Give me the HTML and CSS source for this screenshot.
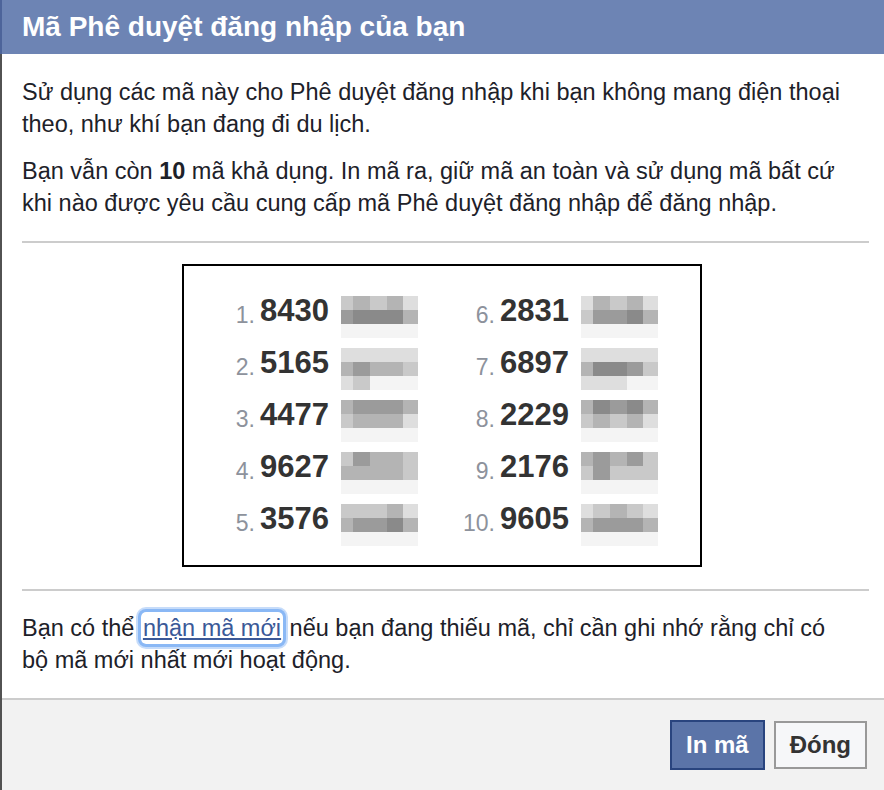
FILE: index.html
```html
<!DOCTYPE html>
<html lang="vi">
<head>
  <meta charset="UTF-8" />
  <title>Mã Phê duyệt đăng nhập của bạn</title>
  <link rel="stylesheet" href="styles.css">
</head>
<body>
  <div class="dialog">
    <header>Mã Phê duyệt đăng nhập của bạn</header>

    <main>
      <p>Sử dụng các mã này cho Phê duyệt đăng nhập khi bạn không mang điện thoại theo, như khí bạn đang đi du lịch.</p>
      <p>Bạn vẫn còn <b>10</b> mã khả dụng. In mã ra, giữ mã an toàn và sử dụng mã bất cứ khi nào được yêu cầu cung cấp mã Phê duyệt đăng nhập để đăng nhập.</p>

      <hr>

      <div class="codebox">
        <div class="codes">
          <div class="code"><span class="idx">1.</span><span class="num">8430</span>
            <span class="blur"><i class="s4"></i><i class="s3"></i><i class="s4"></i><i class="s3"></i><i class="s5"></i><i class="s2"></i><i class="s1"></i><i class="s1"></i><i class="s1"></i><i class="s3"></i><i class="s6"></i><i class="s6"></i><i class="s6"></i><i class="s6"></i><i class="s6"></i></span></div>
          <div class="code"><span class="idx">6.</span><span class="num">2831</span>
            <span class="blur"><i class="s5"></i><i class="s3"></i><i class="s4"></i><i class="s3"></i><i class="s5"></i><i class="s4"></i><i class="s2"></i><i class="s2"></i><i class="s1"></i><i class="s3"></i><i class="s6"></i><i class="s6"></i><i class="s6"></i><i class="s6"></i><i class="s6"></i></span></div>
          <div class="code"><span class="idx">2.</span><span class="num">5165</span>
            <span class="blur"><i class="s5"></i><i class="s5"></i><i class="s5"></i><i class="s5"></i><i class="s5"></i><i class="s3"></i><i class="s2"></i><i class="s3"></i><i class="s3"></i><i class="s4"></i><i class="s5"></i><i class="s4"></i><i class="s6"></i><i class="s6"></i><i class="s6"></i></span></div>
          <div class="code"><span class="idx">7.</span><span class="num">6897</span>
            <span class="blur"><i class="s5"></i><i class="s5"></i><i class="s5"></i><i class="s5"></i><i class="s5"></i><i class="s3"></i><i class="s1"></i><i class="s1"></i><i class="s2"></i><i class="s4"></i><i class="s5"></i><i class="s5"></i><i class="s5"></i><i class="s6"></i><i class="s6"></i></span></div>
          <div class="code"><span class="idx">3.</span><span class="num">4477</span>
            <span class="blur"><i class="s3"></i><i class="s2"></i><i class="s2"></i><i class="s2"></i><i class="s3"></i><i class="s4"></i><i class="s3"></i><i class="s3"></i><i class="s3"></i><i class="s5"></i><i class="s6"></i><i class="s6"></i><i class="s6"></i><i class="s6"></i><i class="s6"></i></span></div>
          <div class="code"><span class="idx">8.</span><span class="num">2229</span>
            <span class="blur"><i class="s3"></i><i class="s1"></i><i class="s2"></i><i class="s1"></i><i class="s3"></i><i class="s4"></i><i class="s3"></i><i class="s4"></i><i class="s3"></i><i class="s5"></i><i class="s6"></i><i class="s6"></i><i class="s6"></i><i class="s6"></i><i class="s6"></i></span></div>
          <div class="code"><span class="idx">4.</span><span class="num">9627</span>
            <span class="blur"><i class="s4"></i><i class="s2"></i><i class="s3"></i><i class="s3"></i><i class="s4"></i><i class="s3"></i><i class="s3"></i><i class="s3"></i><i class="s3"></i><i class="s4"></i><i class="s6"></i><i class="s6"></i><i class="s6"></i><i class="s6"></i><i class="s6"></i></span></div>
          <div class="code"><span class="idx">9.</span><span class="num">2176</span>
            <span class="blur"><i class="s3"></i><i class="s2"></i><i class="s3"></i><i class="s2"></i><i class="s4"></i><i class="s4"></i><i class="s2"></i><i class="s4"></i><i class="s4"></i><i class="s4"></i><i class="s6"></i><i class="s6"></i><i class="s6"></i><i class="s6"></i><i class="s6"></i></span></div>
          <div class="code"><span class="idx">5.</span><span class="num">3576</span>
            <span class="blur"><i class="s4"></i><i class="s4"></i><i class="s4"></i><i class="s3"></i><i class="s5"></i><i class="s3"></i><i class="s2"></i><i class="s2"></i><i class="s1"></i><i class="s3"></i><i class="s6"></i><i class="s6"></i><i class="s6"></i><i class="s6"></i><i class="s6"></i></span></div>
          <div class="code"><span class="idx">10.</span><span class="num">9605</span>
            <span class="blur"><i class="s5"></i><i class="s4"></i><i class="s3"></i><i class="s4"></i><i class="s5"></i><i class="s3"></i><i class="s2"></i><i class="s2"></i><i class="s2"></i><i class="s3"></i><i class="s6"></i><i class="s6"></i><i class="s6"></i><i class="s6"></i><i class="s6"></i></span></div>
        </div>
      </div>

      <hr>

      <p>Bạn có thể <a href="#" class="focused">nhận mã mới</a> nếu bạn đang thiếu mã, chỉ cần ghi nhớ rằng chỉ có bộ mã mới nhất mới hoạt động.</p>
    </main>

    <footer>
      <button class="primary">In mã</button>
      <button>Đóng</button>
    </footer>
  </div>
</body>
</html>
```

FILE: styles.css
```css
* { box-sizing: border-box; }
html, body {
  margin: 0; padding: 0;
  height: 100%;
  background: #fff;
  font-family: 'Liberation Sans', Arial, Helvetica, sans-serif;
  color: #1d2129;
}

.dialog {
  height: 100vh;
  display: flex;
  flex-direction: column;
  border-left: 2px solid #525252;
}

header {
  height: 54px;
  background: #6d84b4;
  color: #fff;
  font-weight: bold;
  font-size: 28px;
  display: flex;
  align-items: center;
  padding: 0 20px;
  margin-left: -2px;
  border-left: 2px solid #4d649a;
}

main {
  flex: 1;
  padding: 22px 15px 0 20px;
}

main p {
  font-size: 23.5px;
  line-height: 32px;
  margin: 0 17px 15px 0;
}

hr {
  border: none;
  border-top: 2px solid #ccc;
  margin: 0;
}

main hr:first-of-type { margin: 22px 0 21px; }
main hr:last-of-type { margin: 22px 0 21px; }

.codebox {
  width: 520px;
  margin: 0 0 0 160px;
  border: 2px solid #000;
  padding: 19px 0 20px 31px;
}

.codes {
  display: grid;
  grid-template-columns: 240px 240px;
}

.code {
  height: 52px;
  display: flex;
  align-items: center;
}

.idx {
  width: 40px;
  text-align: right;
  font-size: 23px;
  color: #8d929c;
  margin-top: 8px;
}

.num {
  font-size: 31px;
  font-weight: bold;
  color: #333;
  margin-left: 5px;
  width: 81px;
}

.blur {
  display: grid;
  grid-template-columns: 12px 17px 17px 16px 15px;
  grid-auto-rows: 14px;
  margin-top: 12px;
}

.blur i { display: block; }
.s1 { background: #8a8a8a; }
.s2 { background: #9b9b9b; }
.s3 { background: #b4b4b4; }
.s4 { background: #c9c9c9; }
.s5 { background: #dedede; }
.s6 { background: #f4f4f4; }

a {
  color: #3b5998;
}

a.focused {
  border-radius: 5px;
  box-shadow: 0 0 0 3px #8ab8f5, 0 0 0 5px #c6dcfa;
  padding: 3px 2px;
}

footer {
  height: 92px;
  background: #f2f2f2;
  border-top: 2px solid #ccc;
  display: flex;
  justify-content: flex-end;
  align-items: flex-start;
  gap: 9px;
  padding: 20px 17px 0 0;
}

footer button {
  height: 48px;
  padding: 0 14px;
  font-family: inherit;
  font-size: 24px;
  font-weight: bold;
  color: #333;
  background: #f6f7f9;
  border: 2px solid #999;
  margin-top: 1px;
}

footer button.primary {
  background: #5b74a8;
  border-color: #29447e;
  color: #fff;
  height: 50px;
  margin-top: 0;
}
```
